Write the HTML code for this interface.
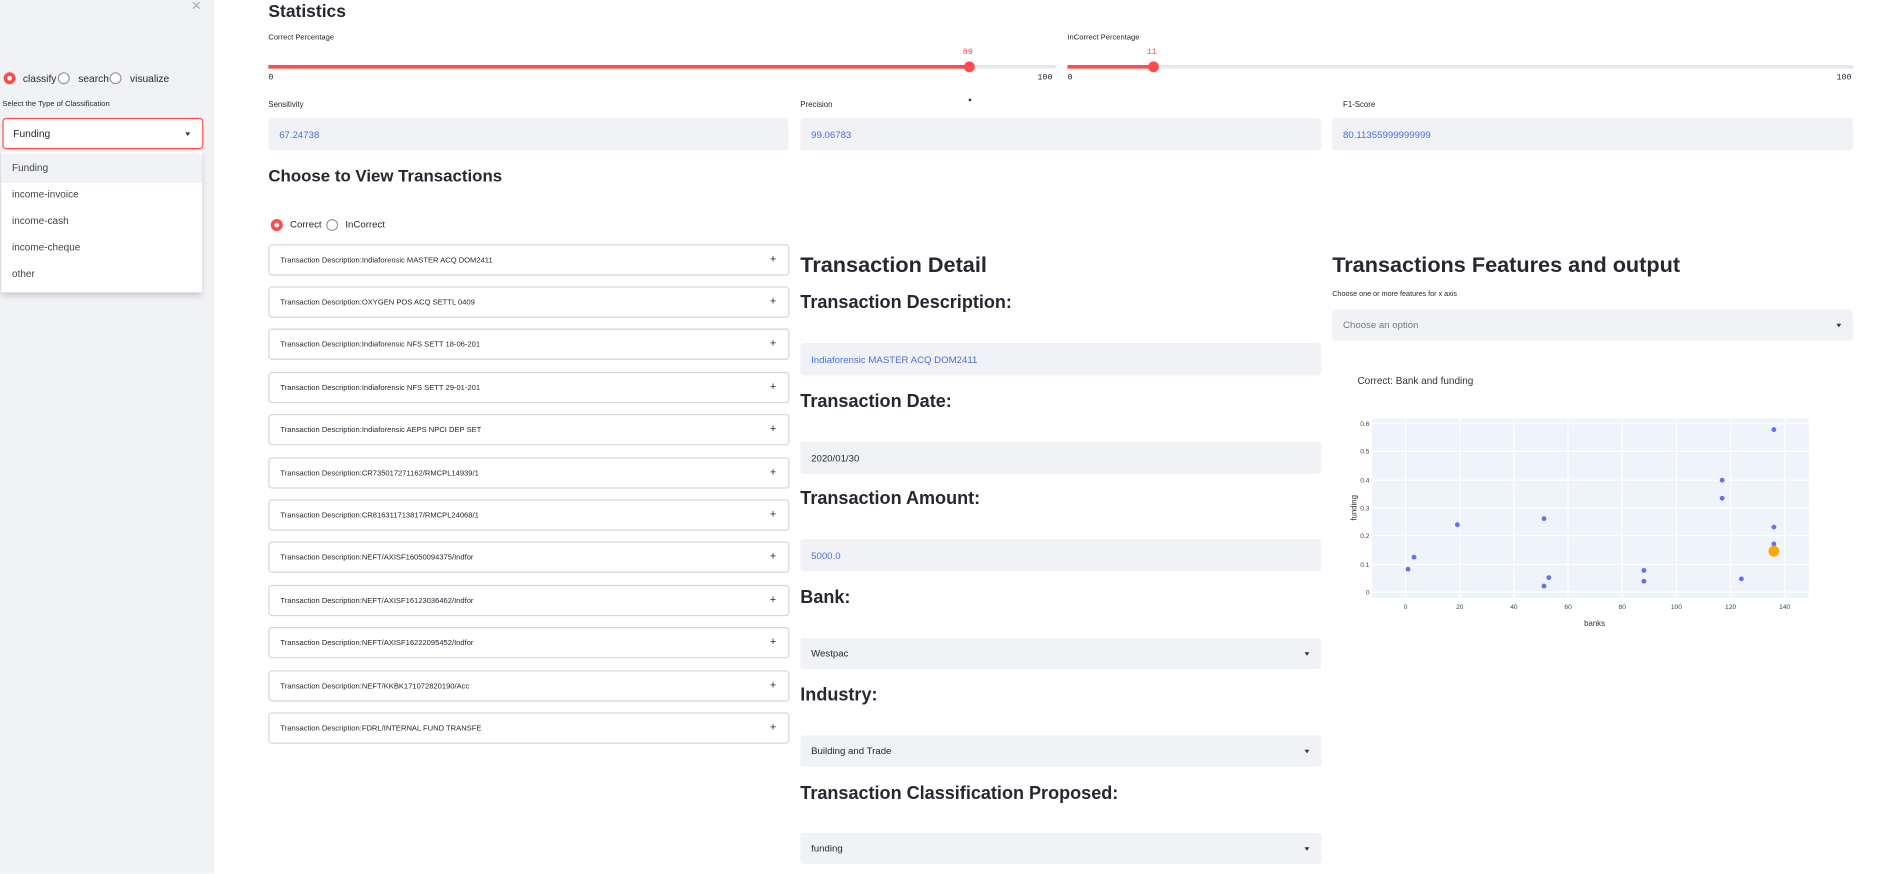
<!DOCTYPE html>
<html><head><meta charset="utf-8"><style>
html,body{margin:0;padding:0;width:1887px;height:873px;overflow:hidden;background:#fff;}
#w{position:absolute;left:0;top:0;width:1568px;height:726px;transform:scale(1.20344);transform-origin:0 0;font-family:"Liberation Sans",sans-serif;color:#262730;}
.a{position:absolute;white-space:nowrap;}
.sb{position:absolute;left:0;top:0;width:178px;height:726px;background:#f0f2f6;}
.rad{position:absolute;width:10px;height:10px;border-radius:50%;border:1px solid #999;background:#fff;box-sizing:border-box;}
.rad.on{border:3px solid #ff4b4b;}
.lbl{font-size:7px;}
.box{position:absolute;background:#f0f2f6;border-radius:3px;font-size:8px;}
.box span{position:absolute;left:9px;top:50%;transform:translateY(-50%);}
.blue{color:#4a6ee0;}
.exp{position:absolute;left:223px;width:433px;height:26px;border:1px solid #d6d6d9;border-radius:3px;box-sizing:border-box;font-size:6.3px;}
.exp span{position:absolute;left:9px;top:9px;}
.exp b{position:absolute;right:10px;top:6px;font-weight:normal;font-size:9px;}
.h3{font-size:15px;font-weight:bold;}
.arr{position:absolute;right:10px;top:50%;width:0;height:0;border-left:2.5px solid transparent;border-right:2.5px solid transparent;border-top:3px solid #333;margin-top:-1px;}
</style></head><body><div id="w">
<div class="sb"></div>
<div class="a" style="left:159px;top:-4px;font-size:14px;color:#aaa">×</div>
<div class="rad on" style="left:3px;top:60px"></div><div class="a" style="left:19px;top:60px;font-size:8.5px">classify</div>
<div class="rad" style="left:48px;top:60px"></div><div class="a" style="left:65px;top:60px;font-size:8.5px">search</div>
<div class="rad" style="left:91px;top:60px"></div><div class="a" style="left:108px;top:60px;font-size:8.5px">visualize</div>
<div class="a lbl" style="left:2px;top:83px;font-size:6.3px">Select the Type of Classification</div>
<div class="a" style="left:2px;top:98px;width:167px;height:26px;background:#fff;border:1px solid #ff4b4b;border-radius:3px;box-sizing:border-box;font-size:8.5px"><span style="position:absolute;left:8px;top:7px">Funding</span><div class="arr"></div></div>
<div class="a" style="left:1px;top:126px;width:167px;height:117px;background:#fff;box-shadow:0 2px 5px rgba(0,0,0,.2);font-size:8.3px;color:#444">
<div style="position:absolute;left:0;top:2px;width:167px;height:24px;background:#f0f2f6"></div>
<div class="a" style="left:9px;top:8px">Funding</div>
<div class="a" style="left:9px;top:30px">income-invoice</div>
<div class="a" style="left:9px;top:52px">income-cash</div>
<div class="a" style="left:9px;top:74px">income-cheque</div>
<div class="a" style="left:9px;top:96px">other</div>
</div>

<div class="a h3" style="left:223px;top:2px;font-size:14.5px">Statistics</div>
<div class="a lbl" style="left:223px;top:28px;font-size:6.3px">Correct Percentage</div>
<div class="a" style="left:223px;top:54px;width:654px;height:3px;background:#e6e7ee"></div>
<div class="a" style="left:223px;top:54px;width:582px;height:3px;background:#ff4b4b"></div>
<div class="a" style="left:801px;top:51px;width:9px;height:9px;border-radius:50%;background:#ff4b4b"></div>
<div class="a" style="left:800px;top:40px;font-size:7px;color:#ff4b4b;font-family:'Liberation Mono',monospace">89</div>
<div class="a" style="left:223px;top:61px;font-size:7px;font-family:'Liberation Mono',monospace">0</div>
<div class="a" style="left:862px;top:61px;font-size:7px;font-family:'Liberation Mono',monospace">100</div>
<div class="a lbl" style="left:887px;top:28px;font-size:6.3px">InCorrect Percentage</div>
<div class="a" style="left:887px;top:54px;width:653px;height:3px;background:#e6e7ee"></div>
<div class="a" style="left:887px;top:54px;width:71px;height:3px;background:#ff4b4b"></div>
<div class="a" style="left:954px;top:51px;width:9px;height:9px;border-radius:50%;background:#ff4b4b"></div>
<div class="a" style="left:953px;top:40px;font-size:7px;color:#ff4b4b;font-family:'Liberation Mono',monospace">11</div>
<div class="a" style="left:887px;top:61px;font-size:7px;font-family:'Liberation Mono',monospace">0</div>
<div class="a" style="left:1526px;top:61px;font-size:7px;font-family:'Liberation Mono',monospace">100</div>
<div class="a" style="left:805px;top:82px;width:2px;height:2px;background:#333"></div>

<div class="a lbl" style="left:223px;top:84px;font-size:6.5px">Sensitivity</div>
<div class="box" style="left:223px;top:98px;width:432px;height:27px"><span class="blue">67.24738</span></div>
<div class="a lbl" style="left:665px;top:84px;font-size:6.5px">Precision</div>
<div class="box" style="left:665px;top:98px;width:433px;height:27px"><span class="blue">99.06783</span></div>
<div class="a lbl" style="left:1116px;top:84px;font-size:6.5px">F1-Score</div>
<div class="box" style="left:1107px;top:98px;width:433px;height:27px"><span class="blue">80.11355999999999</span></div>

<div class="a h3" style="left:223px;top:138px;font-size:14px">Choose to View Transactions</div>
<div class="rad on" style="left:225px;top:182px"></div><div class="a" style="left:241px;top:182px;font-size:8px">Correct</div>
<div class="rad" style="left:271px;top:182px"></div><div class="a" style="left:287px;top:182px;font-size:8px">InCorrect</div>

<div class="exp" style="top:203px"><span>Transaction Description:Indiaforensic MASTER ACQ DOM2411</span><b>+</b></div>
<div class="exp" style="top:238px"><span>Transaction Description:OXYGEN POS ACQ SETTL 0409</span><b>+</b></div>
<div class="exp" style="top:273px"><span>Transaction Description:Indiaforensic NFS SETT 18-06-201</span><b>+</b></div>
<div class="exp" style="top:309px"><span>Transaction Description:Indiaforensic NFS SETT 29-01-201</span><b>+</b></div>
<div class="exp" style="top:344px"><span>Transaction Description:Indiaforensic AEPS NPCI DEP SET</span><b>+</b></div>
<div class="exp" style="top:380px"><span>Transaction Description:CR735017271162/RMCPL14939/1</span><b>+</b></div>
<div class="exp" style="top:415px"><span>Transaction Description:CR816311713817/RMCPL24068/1</span><b>+</b></div>
<div class="exp" style="top:450px"><span>Transaction Description:NEFT/AXISF16050094375/Indfor</span><b>+</b></div>
<div class="exp" style="top:486px"><span>Transaction Description:NEFT/AXISF16123036462/Indfor</span><b>+</b></div>
<div class="exp" style="top:521px"><span>Transaction Description:NEFT/AXISF16222095452/Indfor</span><b>+</b></div>
<div class="exp" style="top:557px"><span>Transaction Description:NEFT/KKBK171072820190/Acc</span><b>+</b></div>
<div class="exp" style="top:592px"><span>Transaction Description:FDRL/INTERNAL FUND TRANSFE</span><b>+</b></div>

<div class="a" style="left:665px;top:210px;font-size:18px;font-weight:bold">Transaction Detail</div>
<div class="a h3" style="left:665px;top:243px">Transaction Description:</div>
<div class="box" style="left:665px;top:285px;width:433px;height:27px"><span class="blue">Indiaforensic MASTER ACQ DOM2411</span></div>
<div class="a h3" style="left:665px;top:325px">Transaction Date:</div>
<div class="box" style="left:665px;top:367px;width:433px;height:27px"><span>2020/01/30</span></div>
<div class="a h3" style="left:665px;top:406px">Transaction Amount:</div>
<div class="box" style="left:665px;top:448px;width:433px;height:27px"><span class="blue">5000.0</span></div>
<div class="a h3" style="left:665px;top:488px">Bank:</div>
<div class="box" style="left:665px;top:530px;width:433px;height:26px"><span>Westpac</span><div class="arr"></div></div>
<div class="a h3" style="left:665px;top:569px">Industry:</div>
<div class="box" style="left:665px;top:611px;width:433px;height:26px"><span>Building and Trade</span><div class="arr"></div></div>
<div class="a h3" style="left:665px;top:651px">Transaction Classification Proposed:</div>
<div class="box" style="left:665px;top:692px;width:433px;height:26px"><span>funding</span><div class="arr"></div></div>

<div class="a" style="left:1107px;top:210px;font-size:18px;font-weight:bold">Transactions Features and output</div>
<div class="a" style="left:1107px;top:242px;font-size:6px">Choose one or more features for x axis</div>
<div class="box" style="left:1107px;top:257px;width:433px;height:26px"><span style="color:#777">Choose an option</span><div class="arr"></div></div>

<svg class="a" style="left:1100px;top:300px" width="440" height="230" font-family="Liberation Sans,sans-serif">
<text x="28" y="19" font-size="8.3" fill="#333">Correct: Bank and funding</text>
<g transform="translate(-1100,-300)">
<rect x="1140" y="348" width="363" height="149" fill="#e5ecf6" opacity="0.6"/>
<g stroke="#fff" stroke-width="1">
<line x1="1168" y1="348" x2="1168" y2="497"/><line x1="1213" y1="348" x2="1213" y2="497"/><line x1="1258" y1="348" x2="1258" y2="497"/><line x1="1303" y1="348" x2="1303" y2="497"/><line x1="1348" y1="348" x2="1348" y2="497"/><line x1="1393" y1="348" x2="1393" y2="497"/><line x1="1438" y1="348" x2="1438" y2="497"/><line x1="1483" y1="348" x2="1483" y2="497"/>
<line x1="1140" y1="492" x2="1503" y2="492"/><line x1="1140" y1="469" x2="1503" y2="469"/><line x1="1140" y1="445" x2="1503" y2="445"/><line x1="1140" y1="422" x2="1503" y2="422"/><line x1="1140" y1="399" x2="1503" y2="399"/><line x1="1140" y1="375" x2="1503" y2="375"/><line x1="1140" y1="352" x2="1503" y2="352"/>
</g>
<g font-size="5.5" fill="#444" text-anchor="end">
<text x="1138" y="494">0</text><text x="1138" y="471">0.1</text><text x="1138" y="447">0.2</text><text x="1138" y="424">0.3</text><text x="1138" y="401">0.4</text><text x="1138" y="377">0.5</text><text x="1138" y="354">0.6</text>
</g>
<g font-size="5.5" fill="#444" text-anchor="middle">
<text x="1168" y="506">0</text><text x="1213" y="506">20</text><text x="1258" y="506">40</text><text x="1303" y="506">60</text><text x="1348" y="506">80</text><text x="1393" y="506">100</text><text x="1438" y="506">120</text><text x="1483" y="506">140</text>
</g>
<text x="1325" y="520" font-size="6.5" fill="#333" text-anchor="middle">banks</text>
<text x="1127" y="422" font-size="6.5" fill="#333" text-anchor="middle" transform="rotate(-90 1127 422)">funding</text>
<g fill="#636efa">
<circle cx="1170" cy="473" r="2"/><circle cx="1175" cy="463" r="2"/><circle cx="1211" cy="436" r="2"/><circle cx="1283" cy="431" r="2"/><circle cx="1283" cy="487" r="2"/><circle cx="1287" cy="480" r="2"/><circle cx="1366" cy="474" r="2"/><circle cx="1366" cy="483" r="2"/><circle cx="1431" cy="399" r="2"/><circle cx="1431" cy="414" r="2"/><circle cx="1447" cy="481" r="2"/><circle cx="1474" cy="357" r="2"/><circle cx="1474" cy="438" r="2"/><circle cx="1474" cy="452" r="2"/>
</g>
<circle cx="1474" cy="458" r="4.5" fill="#ffa500"/>
</g>
</svg>
</div></body></html>
